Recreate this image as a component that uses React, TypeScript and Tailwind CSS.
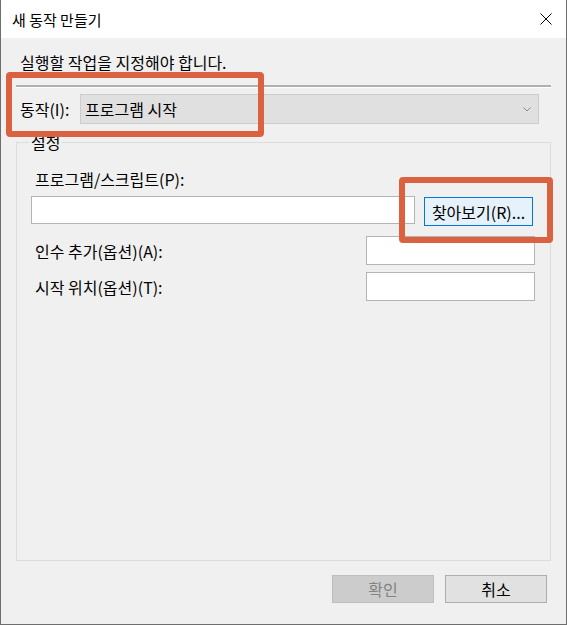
import React from 'react';

const FONT = { fontFamily: '"Malgun Gothic", "Noto Sans CJK KR", "Noto Sans", sans-serif' };

function TextBox({ className }: { className: string }) {
  return <div className={`bg-white border border-[#b4b4b4] ${className}`} />;
}

export default function App() {
  return (
    <div
      className="relative w-[567px] h-[625px] flex flex-col border-x border-b border-[#6e6e6e] bg-[#f0f0f0] text-[16px] text-black overflow-hidden"
      style={FONT}
    >
      {/* title bar */}
      <div className="h-[38px] shrink-0 bg-white flex items-center justify-between pl-[11px] pr-[14px]">
        <span className="text-[15px] leading-none">새 동작 만들기</span>
        <svg width="12" height="12" viewBox="0 0 12 12">
          <path d="M0.5 0.5 L11.5 11.5 M11.5 0.5 L0.5 11.5" stroke="#000" strokeWidth="1" fill="none" />
        </svg>
      </div>

      {/* body */}
      <div className="flex-1 flex flex-col pt-[14px]">
        <div className="h-[20px] leading-[20px] pl-[19px]">실행할 작업을 지정해야 합니다.</div>

        <div className="mt-[13px] ml-[15px] w-[535px] h-[3px] border-t-2 border-[#b0b0b0] border-b border-b-white" />

        <div className="mt-[6px] flex items-center h-[30px]">
          <span className="ml-[19px] w-[60px] leading-none">동작(I):</span>
          <div className="w-[459px] h-[30px] bg-[#e0e0e0] border border-[#cccccc] flex items-center justify-between pl-[4px] pr-[7px]">
            <span className="leading-none">프로그램 시작</span>
            <svg width="8" height="5" viewBox="0 0 8 5">
              <path d="M0.5 0.5 L4 4 L7.5 0.5" stroke="#8a8a8a" strokeWidth="1" fill="none" />
            </svg>
          </div>
        </div>

        {/* group box */}
        <div className="relative mt-[18px] ml-[15px] w-[535px] h-[419px] border border-[#dcdcdc] pl-[14px] pr-[15px]">
          <span className="absolute -top-[11px] left-[12px] px-[2px] bg-[#f0f0f0] leading-[20px]">설정</span>

          <div className="mt-[26px] pl-[4px] h-[20px] leading-[20px]">프로그램/스크립트(P):</div>

          <div className="mt-[7px] flex items-start">
            <TextBox className="w-[384px] h-[28px]" />
            <button className="ml-[9px] mt-[1px] w-[109px] h-[29px] bg-[#e5f1fb] border border-[#0078d7] text-[16px] leading-none flex items-center justify-center">
              찾아보기(R)...
            </button>
          </div>

          <div className="mt-[10px] flex items-center justify-between">
            <span className="pl-[4px] leading-none">인수 추가(옵션)(A):</span>
            <TextBox className="w-[169px] h-[29px]" />
          </div>

          <div className="mt-[7px] flex items-center justify-between">
            <span className="pl-[4px] leading-none">시작 위치(옵션)(T):</span>
            <TextBox className="w-[169px] h-[29px]" />
          </div>
        </div>

        {/* bottom buttons */}
        <div className="mt-[14px] flex justify-end gap-[11px] pr-[19px]">
          <button className="w-[102px] h-[28px] bg-[#cccccc] border border-[#bfbfbf] text-[#838383] leading-none">확인</button>
          <button className="w-[102px] h-[28px] bg-[#e1e1e1] border border-[#adadad] text-black leading-none">취소</button>
        </div>
      </div>

      {/* annotation boxes */}
      <div className="absolute left-[5px] top-[72px] w-[258px] h-[65px] border-[6px] border-[#db6240] rounded-[4px]" />
      <div className="absolute left-[398px] top-[177px] w-[154px] h-[66px] border-[6px] border-[#db6240] rounded-[4px]" />
    </div>
  );
}
